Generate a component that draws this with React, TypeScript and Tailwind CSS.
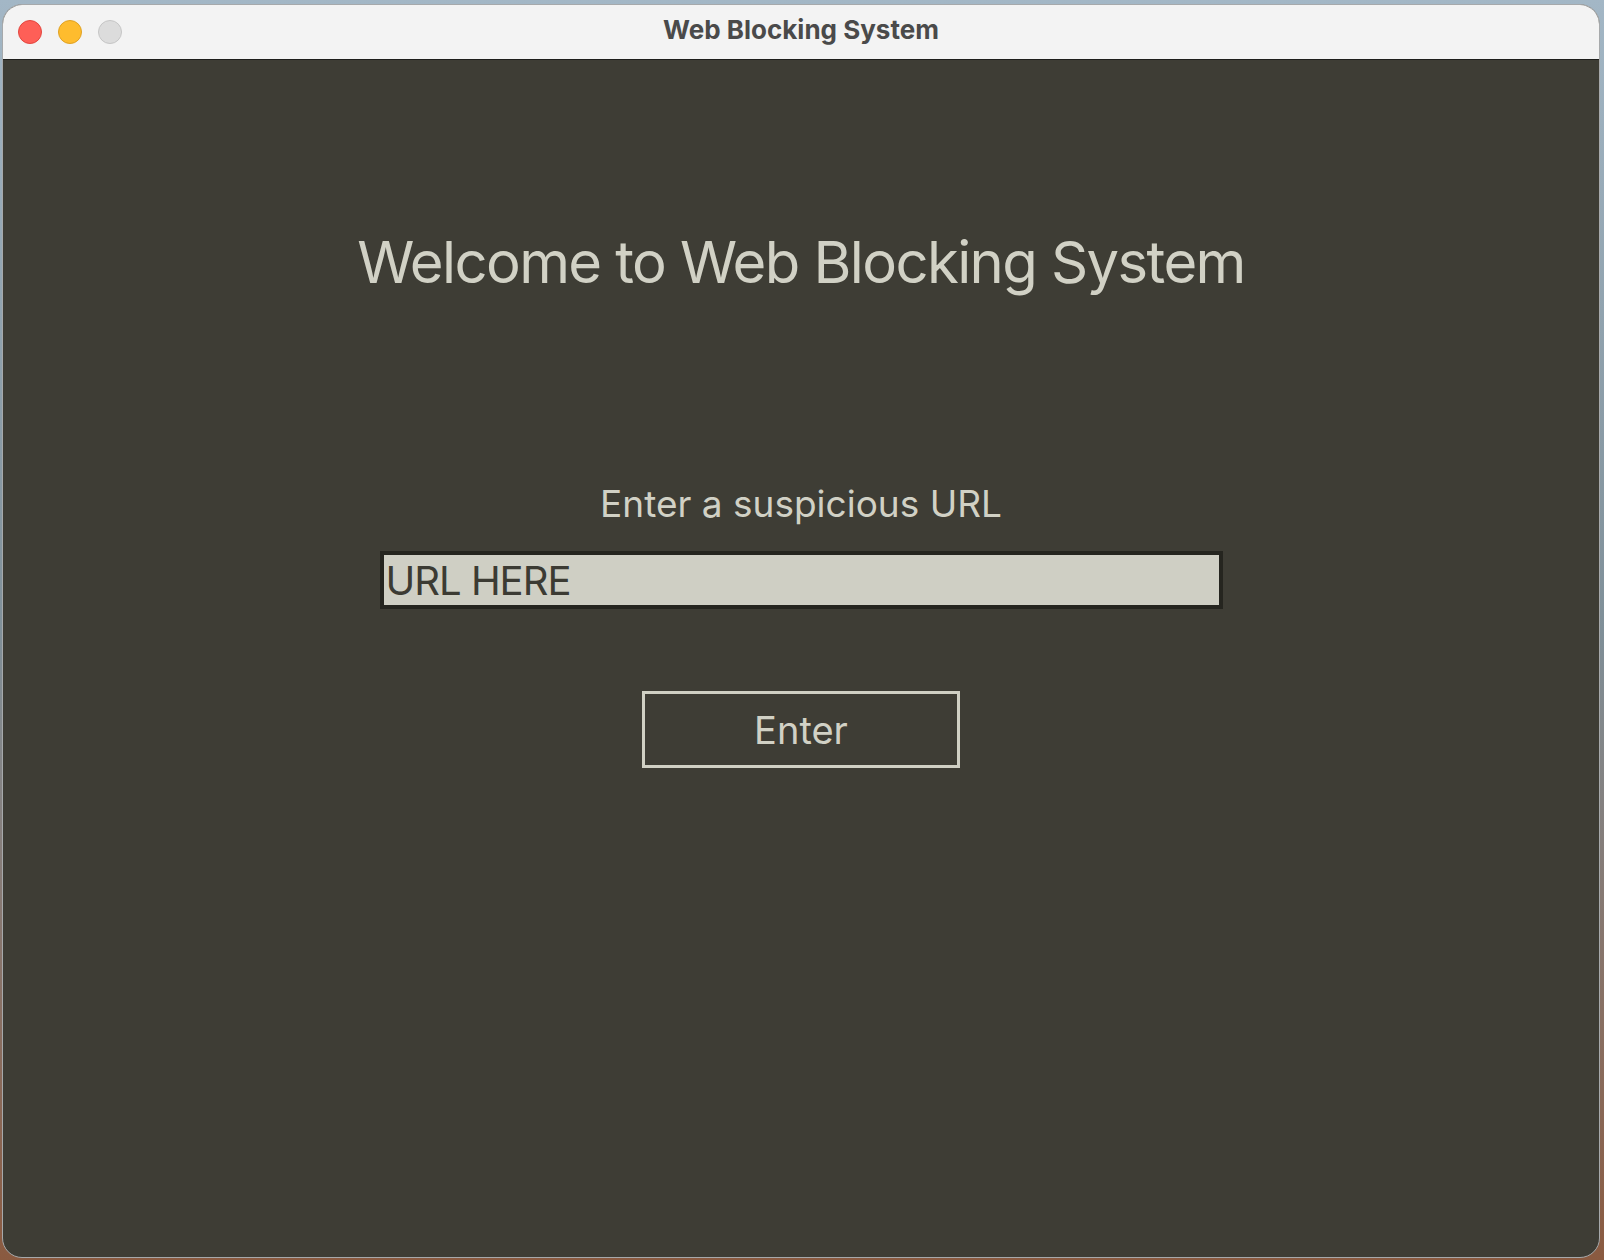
import { useState } from "react";

const App = () => {
  const [url, setUrl] = useState<string>("URL HERE");

  return (
    <div className="w-[1604px] h-[1260px] bg-gradient-to-b from-[#a3b7c6] via-[#7f8f98] to-[#8a5a40] pt-[4px] pl-[2px] pr-[4px] pb-[2px] font-['Inter','Liberation_Sans',sans-serif]">
      {/* window */}
      <div className="h-full flex flex-col rounded-[20px] overflow-hidden border border-[#a6a9ab] bg-[#3e3d35]">
        {/* title bar */}
        <div className="relative h-[55px] shrink-0 bg-[#f3f3f3] border-b border-[#1e1e1b] flex items-center justify-center pb-[4px]">
          <div className="absolute left-[15px] top-[15px] flex gap-[16px]">
            <span className="w-[24px] h-[24px] rounded-full bg-[#fe5f57] border border-[#e2463f]" />
            <span className="w-[24px] h-[24px] rounded-full bg-[#febc2e] border border-[#dfa123]" />
            <span className="w-[24px] h-[24px] rounded-full bg-[#dcdcdc] border border-[#c5c5c5]" />
          </div>
          <span className="text-[26px] leading-none font-bold text-[#4a4a4a]">
            Web Blocking System
          </span>
        </div>

        {/* content */}
        <div className="flex-1 flex flex-col items-center text-[#d1d1c5]">
          <h1 className="mt-[173px] text-[58px] leading-none font-normal tracking-[-1.6px]">
            Welcome to Web Blocking System
          </h1>

          <p className="mt-[194px] text-[37px] leading-none">Enter a suspicious URL</p>

          <input
            value={url}
            onChange={(e) => setUrl(e.target.value)}
            className="mt-[29px] w-[843px] h-[58px] border-[4px] border-[#25251f] bg-[#cfcfc4] text-[#3c3b33] text-[40px] leading-[50px] tracking-[-1px] pl-[2px] outline-none"
          />

          <button
            type="button"
            className="mt-[82px] w-[318px] h-[77px] border-[3px] border-[#d0d0c4] text-[38px] leading-none text-[#d1d1c5]"
          >
            Enter
          </button>
        </div>
      </div>
    </div>
  );
};

export default App;
